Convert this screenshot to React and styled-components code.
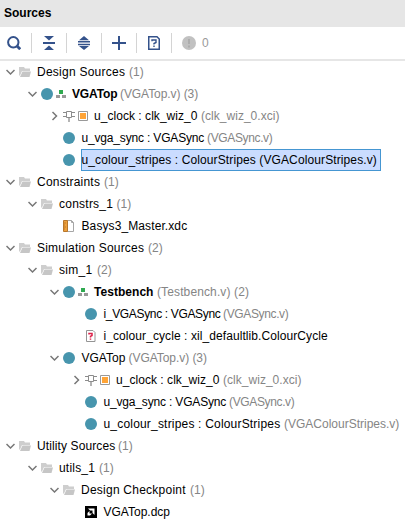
import React from 'react';
import styled, { createGlobalStyle } from 'styled-components';

const Global = createGlobalStyle`
  body { margin: 0; background: #fff; }
  * { box-sizing: border-box; }
`;

const Panel = styled.main`
  width: 405px;
  height: 524px;
  overflow: hidden;
  background: #fff;
  color: #000;
  font: 12px/22px "Liberation Sans", Arial, sans-serif;
`;

const Header = styled.header`
  height: 27px;
  padding-left: 4px;
  background: #e6e6e6;
  font-weight: bold;
  line-height: 26px;
`;

const Toolbar = styled.div`
  display: flex;
  align-items: center;
  height: 34px;
  border-bottom: 2px solid #e6e6e6;
`;

const ToolButton = styled.button`
  display: flex;
  align-items: center;
  justify-content: center;
  width: ${(p) => p.$width || 34}px;
  height: 32px;
  padding: 0 ${(p) => p.$inset || 0}px 0 0;
  border: 0;
  background: none;
  svg { display: block; }
`;

const Separator = styled.span`
  width: 1px;
  height: 20px;
  background: #d4d4d4;
`;

const Messages = styled.div`
  display: flex;
  align-items: center;
  gap: 6px;
  padding-left: 10px;
  color: #999;
`;

const Tree = styled.div`
  display: flex;
  flex-direction: column;
`;

const Row = styled.div`
  display: flex;
  align-items: center;
  height: 22px;
  padding-left: ${(p) => 6 + p.$level * 22}px;
  white-space: pre;
`;

const Twisty = styled.span`
  display: flex;
  flex: none;
  width: 13px;
`;

const Icons = styled.span`
  display: flex;
  flex: none;
  align-items: center;
  gap: 3px;
  width: ${(p) => p.$width}px;
  svg { flex: none; }
`;

const Label = styled.span`
  display: flex;
  height: 22px;
  line-height: 23px;
  flex: none;
  ${(p) => p.$selected && `
    width: 300px;
    margin-left: -1px;
    padding-left: 1px;
    background: #cadcff;
    box-shadow: inset 0 0 0 1px #4596d2;
  `}
`;

const Name = styled.span`
  flex: none;
  width: ${(p) => (p.$width ? `${p.$width}px` : 'auto')};
  font-weight: ${(p) => (p.$bold ? 'bold' : 'normal')};
  letter-spacing: ${(p) => p.$spacing || 0}px;
`;

const Detail = styled.span`
  color: #858585;
  letter-spacing: ${(p) => p.$spacing || 0}px;
`;

const Chevron = ({ open }) => (
  <svg width="9" height="10" viewBox="0 0 9 10" fill="none" stroke="#777" strokeWidth="1.5">
    <path d={open ? 'M.5 3 4.5 7 8.5 3' : 'M2.5 1 6.5 5 2.5 9'} />
  </svg>
);

const Folder = () => (
  <svg width="12" height="12" viewBox="0 0 12 12">
    <path d="M0 1h5l1 1.5h5V5H3L1 9.5H0z" fill="#cecece" />
    <path d="M3.5 5.5H12L10.5 11H1z" fill="#c6c6c6" />
  </svg>
);

const Dot = () => (
  <svg width="12" height="12" viewBox="0 0 12 12"><circle cx="6" cy="6" r="6" fill="#4795ad" /></svg>
);

const Hierarchy = () => (
  <svg width="10" height="9" viewBox="0 0 10 9">
    <path d="M3 0h4v4H3z" fill="#2faa50" />
    <path d="M0 5h4v3H0zM6 5h4v3H6z" fill="#999" />
  </svg>
);

const Chip = () => (
  <svg width="12" height="12" viewBox="0 0 12 12" fill="none" stroke="#8c8c8c">
    <path d="M3.5 1.5h5v6h-5zM0 2.5h3M0 6.5h3M9 2.5h3M9 6.5h3" />
    <path d="M6 8v4" strokeWidth="1.3" />
  </svg>
);

const IpBlock = () => (
  <svg width="10" height="10" viewBox="0 0 10 10">
    <path d="M.5.5h9v9h-9z" fill="#fff" stroke="#999" />
    <path d="M2 2h6v6H2z" fill="#ffa436" />
  </svg>
);

const Constraint = () => (
  <svg width="12" height="12" viewBox="0 0 12 12">
    <path d="M4.5.5h4l2 2v9h-6z" fill="#fff" stroke="#a6a6a6" />
    <path d="M8.5.5v2h2" fill="none" stroke="#a6a6a6" />
    <path d="M.5.5h4v11h-4z" fill="#eda03c" stroke="#b8772c" />
    <path d="M1 3h2M1 5h1M1 7h2M1 9h1" stroke="#a56318" strokeWidth=".6" />
  </svg>
);

const Missing = () => (
  <svg width="12" height="12" viewBox="0 0 12 12" fill="none">
    <path d="M1.5.5h6.5l2 2v9H1.5z" fill="#fff" stroke="#949494" />
    <path d="M4 4.6V3.5h3v2L5.5 6.4V7.5M5.5 8.4V9.8" stroke="#dd1f48" strokeWidth="1.5" />
  </svg>
);

const Checkpoint = () => (
  <svg width="12" height="12" viewBox="0 0 12 12">
    <path d="M0 0h12v12H0z" fill="#000" />
    <path d="M3 2.5h6.5V9L7.5 7V4.5H5zM4.5 5 2.5 7v2.5H5L7 7.5H4.5z" fill="#fff" />
  </svg>
);

const Search = () => (
  <svg width="14" height="14" viewBox="0 0 14 14" fill="none" stroke="#34528b" strokeWidth="2">
    <circle cx="6.3" cy="6.3" r="5.2" />
    <path d="m10 10 3.2 3.2" strokeWidth="2.8" />
  </svg>
);

const Collapse = () => (
  <svg width="12" height="14" viewBox="0 0 12 14" fill="#34528b">
    <path d="M1 0h10L6 4.5zM0 6h12v2H0zM6 9.5 11 14H1z" />
  </svg>
);

const Expand = () => (
  <svg width="12" height="14" viewBox="0 0 12 14" fill="#34528b">
    <path d="M6 0l5 4.3H1zM0 5h12v1.5H0zM0 7.7h12v1.5H0zM1 10h10L6 14z" />
  </svg>
);

const Plus = () => (
  <svg width="14" height="14" viewBox="0 0 14 14" fill="#34528b">
    <path d="M6 0h2v6h6v2H8v6H6V8H0V6h6z" />
  </svg>
);

const HelpPage = () => (
  <svg width="12" height="14" viewBox="0 0 12 14" fill="none" stroke="#34528b">
    <path d="M.75.75H9l2.25 2.25v10.25H.75z" strokeWidth="1.5" />
    <path d="M4 5.2V4h4v2.5L6 7.5v1M6 9.5V11" strokeWidth="1.4" />
  </svg>
);

const Alert = () => (
  <svg width="14" height="14" viewBox="0 0 14 14">
    <circle cx="7" cy="7" r="7" fill="#c1c1c1" />
    <path d="M6 3h2v5H6zM6 9.5h2v2H6z" fill="#adadad" />
  </svg>
);

// Main icon, width of the icon cell, optional second icon
const ICONS = {
  folder: [Folder, 18],
  module: [Dot, 18.5],
  top: [Dot, 31, Hierarchy],
  ip: [Chip, 31, IpBlock],
  constraint: [Constraint, 18.5],
  missing: [Missing, 18.5],
  checkpoint: [Checkpoint, 18.5],
};

// level, expanded state, icon, name, detail, name width, name spacing, detail spacing
const ROWS = [
  [0, true, 'folder', 'Design Sources', '(1)', 92, 0.25],
  [1, true, 'top', 'VGATop', '(VGATop.v) (3)', 48, -0.15, -0.07],
  [2, false, 'ip', 'u_clock : clk_wiz_0', '(clk_wiz_0.xci)', 107, 0.04, 0.03],
  [2, null, 'module', 'u_vga_sync : VGASync', '(VGASync.v)', 125.5, -0.17, -0.36],
  [2, null, 'module', 'u_colour_stripes : ColourStripes (VGAColourStripes.v)', '', 0, 0.113],
  [0, true, 'folder', 'Constraints', '(1)', 67, 0.22],
  [1, true, 'folder', 'constrs_1', '(1)', 57.5, 0.24],
  [2, null, 'constraint', 'Basys3_Master.xdc', '', 0, 0.1],
  [0, true, 'folder', 'Simulation Sources', '(2)', 111, 0.21],
  [1, true, 'folder', 'sim_1', '(2)', 38, 0.3],
  [2, true, 'top', 'Testbench', '(Testbench.v) (2)', 63, 0.04, 0.12],
  [3, null, 'module', 'i_VGASync : VGASync', '(VGASync.v)', 119.5, -0.34, -0.36],
  [3, null, 'missing', 'i_colour_cycle : xil_defaultlib.ColourCycle', '', 0, 0.08],
  [2, true, 'module', 'VGATop', '(VGATop.v) (3)', 47, 0, -0.05],
  [3, false, 'ip', 'u_clock : clk_wiz_0', '(clk_wiz_0.xci)', 107, 0.04, 0.03],
  [3, null, 'module', 'u_vga_sync : VGASync', '(VGASync.v)', 125.5, -0.17, -0.36],
  [3, null, 'module', 'u_colour_stripes : ColourStripes', '(VGAColourStripes.v)', 180.5, 0.19],
  [0, true, 'folder', 'Utility Sources', '(1)', 81, 0.11],
  [1, true, 'folder', 'utils_1', '(1)', 40, 0.2],
  [2, true, 'folder', 'Design Checkpoint', '(1)', 109, 0.24],
  [3, null, 'checkpoint', 'VGATop.dcp', '', 0],
];

function TreeRow({ row }) {
  const [level, open, icon, name, detail, width, nameSpacing, detailSpacing] = row;
  const [Main, iconWidth, Extra] = ICONS[icon];
  return (
    <Row $level={level}>
      <Twisty>{open !== null && <Chevron open={open} />}</Twisty>
      <Icons $width={iconWidth}>
        <Main />
        {Extra && <Extra />}
      </Icons>
      <Label $selected={name.includes('(')}>
        <Name $width={width} $bold={icon === 'top'} $spacing={nameSpacing}>{name}</Name>
        {detail && <Detail $spacing={detailSpacing}>{detail}</Detail>}
      </Label>
    </Row>
  );
}

export default function App() {
  return (
    <>
      <Global />
      <Panel>
        <Header>Sources</Header>
        <Toolbar>
          <ToolButton $width={31} $inset={3}><Search /></ToolButton>
          <Separator />
          <ToolButton><Collapse /></ToolButton>
          <Separator />
          <ToolButton><Expand /></ToolButton>
          <Separator />
          <ToolButton><Plus /></ToolButton>
          <Separator />
          <ToolButton><HelpPage /></ToolButton>
          <Separator />
          <Messages><Alert /><span>0</span></Messages>
        </Toolbar>
        <Tree>{ROWS.map((row, i) => <TreeRow key={i} row={row} />)}</Tree>
      </Panel>
    </>
  );
}
